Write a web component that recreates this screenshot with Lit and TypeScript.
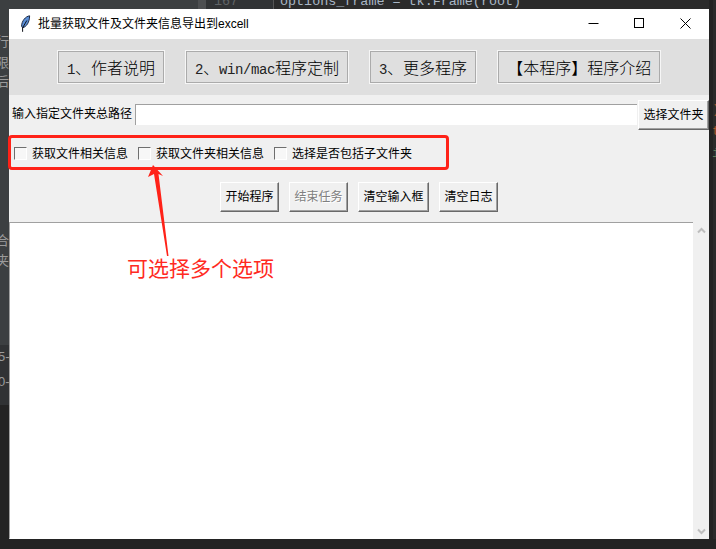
import { LitElement, html, css } from "lit";
import { customElement } from "lit/decorators.js";

@customElement("app-root")
export class AppRoot extends LitElement {
  static styles = css`
    :host {
      display: block;
      position: relative;
      width: 716px;
      height: 549px;
      overflow: hidden;
      background: #232323;
      font-family: "Liberation Sans", "Noto Sans CJK SC", sans-serif;
      font-size: 12px;
      color: #000;
    }
    .desk { position: absolute; inset: 0; overflow: hidden; }
    .panel { position: absolute; left: 0; top: 0; width: 198px; height: 345px; background: #3c3f41; }
    .panel2 { position: absolute; left: 0; top: 345px; width: 198px; height: 60px; background: #303234; }
    .thumb { position: absolute; left: 198px; top: 0; width: 8px; height: 10px; background: #4d4f51; }
    .gutter { position: absolute; left: 206px; top: 0; width: 67px; height: 12px; background: #313335; border-right: 1px solid #555; }
    .code { position: absolute; left: 274px; top: 0; right: 0; height: 549px; background: #2b2b2b; }
    .bottom { position: absolute; left: 0; right: 0; top: 539px; height: 10px; background: #232323; }
    .rightband { position: absolute; left: 709px; top: 0; width: 4px; height: 549px; background: #232323; }
    .frag { position: absolute; white-space: nowrap; line-height: 16px; color: #9b9b9b; font-size: 13px; }
    .mono { font-family: "Liberation Mono", monospace; color: #a9b7c6; font-size: 13.4px; }
    .dim { color: #606366; }
    .org { color: #a5552b; }
    .grn { color: #5d7a58; }

    .outer { padding-top: 9px; height: 549px; box-sizing: border-box; position: relative; }
    .window {
      position: relative;
      margin-left: 9px;
      width: 700px;
      height: 530px;
      background: #f0f0f0;
      display: flex;
      flex-direction: column;
    }

    .title {
      height: 30px;
      flex: none;
      background: #fff;
      display: flex;
      align-items: center;
      padding-left: 11px;
    }
    .feather { width: 12px; height: 18px; margin-right: 6px; flex: none; }
    .title-text { flex: 1; line-height: 30px; white-space: nowrap; }
    .win-ctl { display: flex; }
    .ctl { width: 46px; height: 30px; display: block; }

    .toolbar {
      height: 56px;
      flex: none;
      box-sizing: border-box;
      background: #dfdfdf;
      display: flex;
      align-items: center;
      gap: 22px;
      padding-left: 49px;
    }
    .big {
      height: 32px;
      box-sizing: border-box;
      padding: 0 8px;
      margin: 0;
      border: 1px solid #ababab;
      outline: 1px solid #f6f6f6;
      background: #dfdfdf;
      font-family: "Noto Sans CJK SC", sans-serif;
      font-weight: 300;
      font-size: 16px;
      line-height: 30px;
      white-space: nowrap;
      color: #000;
    }
    .big .lat {
      font-family: "Liberation Mono", monospace;
      font-size: 14px;
      letter-spacing: -0.4px;
      font-weight: 400;
      color: #222;
    }

    .path-row {
      flex: none;
      height: 35px;
      display: flex;
      align-items: flex-start;
      padding-left: 3px;
      padding-top: 5px;
      box-sizing: border-box;
    }
    .path-label { line-height: 21px; margin-top: 4px; margin-right: 3px; white-space: nowrap; width: 120px; flex: none; }
    .path-input {
      flex: 1;
      min-width: 0;
      height: 21px;
      margin: 4px 1px 0 0;
      padding: 0;
      box-sizing: border-box;
      border: 0;
      border-top: 1px solid #a0a0a0;
      border-left: 1px solid #a0a0a0;
      background: #fff;
      outline: none;
    }
    .raised {
      box-sizing: border-box;
      height: 30px;
      margin: 0;
      padding: 0 4.5px;
      background: #f0f0f0;
      border: 1px solid;
      border-color: #fff #696969 #696969 #fff;
      box-shadow: inset -1px -1px 0 #a0a0a0;
      font-family: "Liberation Sans", "Noto Sans CJK SC", sans-serif;
      font-size: 12px;
      line-height: 28px;
      color: #000;
      white-space: nowrap;
    }
    .raised.pick { width: 71px; flex: none; padding: 0 4px; }
    .raised[disabled] { color: #808080; text-shadow: 1px 1px 0 #fff; }

    .checks {
      flex: none;
      height: 46px;
      box-sizing: border-box;
      padding: 1px 0 0 5px;
      display: flex;
      align-items: center;
      gap: 10px;
    }
    .check { display: flex; align-items: center; gap: 5px; line-height: 16px; white-space: nowrap; }
    .box {
      appearance: none;
      -webkit-appearance: none;
      width: 13px;
      height: 13px;
      margin: 0;
      box-sizing: border-box;
      flex: none;
      background: #f7f7f7;
      border: 1px solid;
      border-color: #6e6e6e #fff #fff #6e6e6e;
    }

    .actions {
      flex: none;
      height: 30px;
      margin-top: 6px;
      margin-bottom: 10px;
      display: flex;
      gap: 10px;
      padding-left: 211px;
    }

    .log-wrap { flex: 1; min-height: 0; display: flex; }
    .log {
      flex: 1;
      background: #fff;
      box-sizing: border-box;
      border-top: 1px solid #a0a0a0;
      border-left: 1px solid #a0a0a0;
      border-bottom: 1px solid #fff;
    }
    .scroll {
      flex: none;
      width: 16px;
      display: flex;
      flex-direction: column;
      justify-content: space-between;
      align-items: center;
      padding: 5px 0 4px;
      box-sizing: border-box;
    }
    .chev { width: 9px; height: 7px; display: block; }

    .note { position: absolute; inset: 0; pointer-events: none; }
    .hi {
      position: absolute;
      left: 8px;
      top: 135px;
      width: 441px;
      height: 35px;
      box-sizing: border-box;
      border: 3px solid #ff2218;
      border-radius: 4px;
    }
    .arrow { position: absolute; left: 0; top: 0; width: 716px; height: 549px; }
    .note-text {
      position: absolute;
      left: 127px;
      top: 254px;
      line-height: 26px;
      font-size: 21px;
      color: #ff2a22;
      white-space: nowrap;
      font-family: "Noto Sans CJK SC", sans-serif;
      font-weight: 400;
    }
  `;

  render() {
    return html`
      <div class="desk">
        <div class="panel"></div>
        <div class="panel2"></div>
        <div class="thumb"></div>
        <div class="gutter"></div>
        <div class="code"></div>
        <div class="rightband"></div>
        <div class="bottom"></div>
        <span class="frag" style="left:-4px;top:34px">行</span>
        <span class="frag" style="left:-4px;top:55px">限</span>
        <span class="frag" style="left:-4px;top:74px">后</span>
        <span class="frag" style="left:-4px;top:233px">合</span>
        <span class="frag" style="left:-4px;top:253px">夹</span>
        <span class="frag" style="left:-2px;top:349px">5-</span>
        <span class="frag" style="left:-2px;top:374px">0-</span>
        <span class="frag mono dim" style="left:214px;top:-6px">167</span>
        <span class="frag mono" style="left:280px;top:-6px">options_frame = tk.Frame(root)</span>
        <span class="frag mono org" style="left:712px;top:102px">)</span>
        <span class="frag mono org" style="left:712px;top:124px">t</span>
        <span class="frag mono grn" style="left:712px;top:146px">i</span>
      </div>
      <div class="outer">
        <div class="window">
          <div class="title">
            <svg class="feather" viewBox="0 0 12 18">
              <path d="M9.6 0.8C5.5 1.4 1.6 6 1.6 11.2L2.6 12.8C6.4 11.8 9.6 7.4 9.6 0.8Z" fill="#5b8fd8" stroke="#1c2a44" stroke-width="1"/>
              <path d="M6.8 5.5L2.6 12.8L2.6 16.8" fill="none" stroke="#10131a" stroke-width="1"/>
            </svg>
            <div class="title-text">批量获取文件及文件夹信息导出到excell</div>
            <div class="win-ctl">
              <svg class="ctl" viewBox="0 0 46 30"><path d="M17.5 14.5H27.5" stroke="#000" fill="none"/></svg>
              <svg class="ctl" viewBox="0 0 46 30"><rect x="17.5" y="9.5" width="9" height="9" stroke="#000" fill="none"/></svg>
              <svg class="ctl" viewBox="0 0 46 30"><path d="M17.5 9.5L27.5 19.5M27.5 9.5L17.5 19.5" stroke="#000" fill="none"/></svg>
            </div>
          </div>
          <div class="toolbar">
            <button class="big"><span class="lat">1</span>、作者说明</button>
            <button class="big"><span class="lat">2</span>、<span class="lat">win/mac</span>程序定制</button>
            <button class="big"><span class="lat">3</span>、更多程序</button>
            <button class="big">【本程序】程序介绍</button>
          </div>
          <div class="path-row">
            <div class="path-label">输入指定文件夹总路径</div>
            <input class="path-input" type="text" />
            <button class="raised pick">选择文件夹</button>
          </div>
          <div class="checks">
            <label class="check"><input class="box" type="checkbox" />获取文件相关信息</label>
            <label class="check"><input class="box" type="checkbox" />获取文件夹相关信息</label>
            <label class="check"><input class="box" type="checkbox" />选择是否包括子文件夹</label>
          </div>
          <div class="actions">
            <button class="raised">开始程序</button>
            <button class="raised" disabled>结束任务</button>
            <button class="raised">清空输入框</button>
            <button class="raised">清空日志</button>
          </div>
          <div class="log-wrap">
            <div class="log"></div>
            <div class="scroll">
              <svg class="chev" viewBox="0 0 9 7"><path d="M1 5.5L4.5 2L8 5.5" fill="none" stroke="#bdbdbd" stroke-width="2"/></svg>
              <svg class="chev" viewBox="0 0 9 7"><path d="M1 1.5L4.5 5L8 1.5" fill="none" stroke="#bdbdbd" stroke-width="2"/></svg>
            </div>
          </div>
        </div>
      </div>
      <div class="note">
        <div class="hi"></div>
        <svg class="arrow" viewBox="0 0 716 549">
          <polygon points="153,165 163,176 158.5,174 168.5,256 167,256 154,174 148,177" fill="#ff2218"/>
        </svg>
        <div class="note-text">可选择多个选项</div>
      </div>
    `;
  }
}
